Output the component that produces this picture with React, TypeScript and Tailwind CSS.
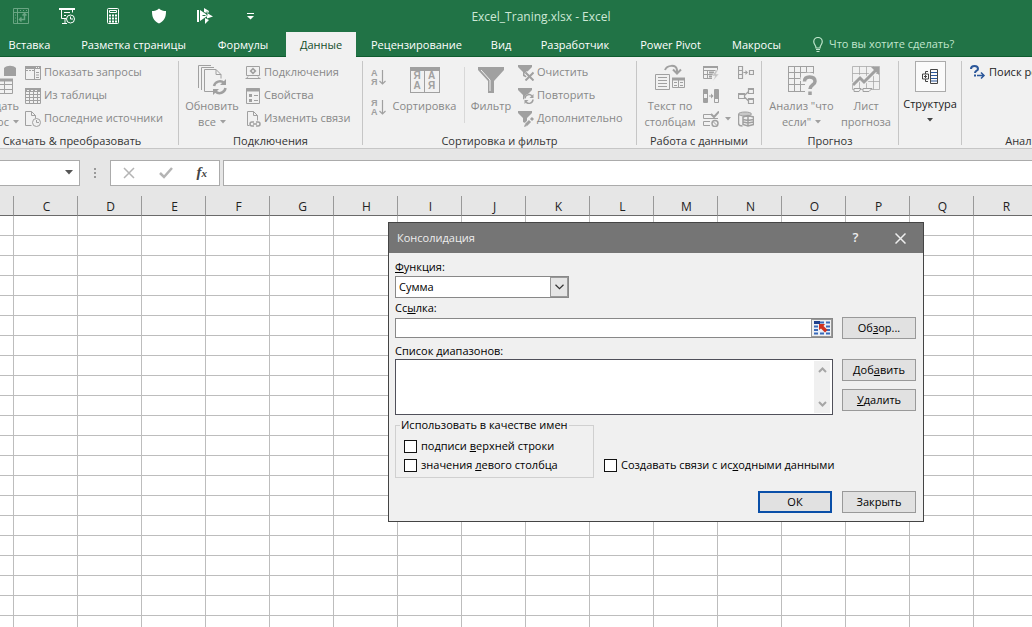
import React, { useState } from 'react';

const columns = 'CDEFGHIJKLMNOPQRSTUVWXYZ'.split('');
const rows = Array.from({ length: 50 }, (_, i) => i);

const tabs = [
    { name: 'Вставка', width: 'w-[67px] pr-2' },
    { name: 'Разметка страницы', width: 'w-[133px]' },
    { name: 'Формулы', width: 'w-[86px]' },
    { name: 'Данные', width: 'w-[70px]' },
    { name: 'Рецензирование', width: 'w-[121px]' },
    { name: 'Вид', width: 'w-[48px]' },
    { name: 'Разработчик', width: 'w-[100px]' },
    { name: 'Power Pivot', width: 'w-[91px]' },
    { name: 'Макросы', width: 'w-[81px]' },
];

/* ---------- Icons ---------- */

interface IconProps {
    size?: number;
    className?: string;
    children: React.ReactNode;
}

function Icon({ size = 16, className = 'text-[#a0a0a0]', children }: IconProps) {
    return (
        <svg
            width={size}
            height={size}
            viewBox={`0 0 ${size} ${size}`}
            fill="none"
            stroke="currentColor"
            className={`shrink-0 ${className}`}
            aria-hidden="true"
        >
            {children}
        </svg>
    );
}

function Caret({ className = 'text-[#a0a0a0]' }: { className?: string }) {
    return (
        <svg width="6" height="4" viewBox="0 0 6 4" className={`inline-block shrink-0 ${className}`} aria-hidden="true">
            <path d="M0 0h6L3 3.5z" fill="currentColor" />
        </svg>
    );
}

const PivotIcon = () => (
    <Icon className="text-[#6aa583]">
        <path d="M.5.5h15v15H.5zM.5 4.5h15M4.5.5v15" />
        <path d="M7 11.5h4.500V6M9.500 7.500l2-2 2 2M8.500 9.500l-2 2 2 2" strokeWidth="1.500" />
        <path d="M2 7h1M2 10h1M2 13h1M7 2.500h1M10 2.500h1M13 2.500h1" />
    </Icon>
);

const PreviewIcon = () => (
    <Icon className="text-white">
        <path d="M0 1h16" strokeWidth="2" />
        <path d="M2.500 1v9.500H7M13.500 1v3.500M5 4.500h6M5 7.500h2" />
        <circle cx="11.500" cy="11" r="4" />
        <path d="M11.500 8.500V11H14M3 15.500h5M6 11v4" />
    </Icon>
);

const CalculatorIcon = () => (
    <Icon className="text-white">
        <rect x="2.500" y=".5" width="11" height="15" rx="1" />
        <path d="M4.500 2.500h7v2h-7z" />
        <path d="M4 7.500h2M7 7.500h2M10 7.500h2M4 10.500h2M7 10.500h2M10 10.500h2M4 13.500h2M7 13.500h2M10 13.500h2" strokeWidth="2" />
    </Icon>
);

const ShieldIcon = () => (
    <Icon className="text-white">
        <path d="M8 .5C6 2.500 3.500 3 1 3c0 6 1.500 10 7 12.500C13.500 13 15 9 15 3 12.500 3 10 2.500 8 .5z" fill="currentColor" stroke="none" />
    </Icon>
);

const RunIcon = () => (
    <Icon className="text-white">
        <path d="M1 2v12" strokeWidth="2" />
        <path d="M3 2l8 5.500L3 13zM7 0l5 3-1 2.500L7 4zM10 5l6 3.500-6 2zM8 10l4 2-4 4z" fill="currentColor" stroke="none" />
        <path d="M5.500 7.500h3M10 3.500v4" stroke="#217346" />
    </Icon>
);

const QueriesIcon = () => (
    <Icon>
        <path d="M.5 1.500h15v13H.5zM9.500 4v10.500" />
        <path d="M0 2.500h16" strokeWidth="3" />
        <path d="M11 7.500h3M11 10h3M11 12.500h3" />
        <path d="M1 5.500h8" strokeDasharray="2 1" />
        <path d="M11 2.500h1M13 2.500h1" stroke="#f1f1f1" />
    </Icon>
);

const TableIcon = () => (
    <Icon>
        <path d="M.5.500h15v15H.5zM.5 6.500h15M.5 9.500h15M.5 12.500h15M4.500 3v12.500M8.500 3v12.500M12.500 3v12.500" />
        <path d="M0 2h16" strokeWidth="4" />
        <path d="M2 2.500h2M6 2.500h2M10 2.500h2" stroke="#f1f1f1" />
    </Icon>
);

const RecentIcon = () => (
    <Icon>
        <path d="M6.500 14.500h-6V.5h6l4 4v3M6.500.5v4h4" />
        <circle cx="11.500" cy="11.500" r="4" />
        <path d="M11.500 9v2.500H14" />
    </Icon>
);

const ConnectionsIcon = () => (
    <Icon>
        <path d="M1.500 1.500h13v9h-13zM.5 13.500h15M3 11.500l-1.500 2M13 11.500l1.500 2" />
        <path d="M8 2.500L11.500 6 8 9.500 4.500 6z" fill="currentColor" stroke="none" />
        <circle cx="8" cy="6" r="1" fill="#f1f1f1" stroke="none" />
    </Icon>
);

const PropertiesIcon = () => (
    <Icon>
        <path d="M1.500.5h13v15h-13z" />
        <path d="M1 2h14" strokeWidth="3" />
        <path d="M4 6h3v3H4zM4 11h3v3H4z" fill="currentColor" stroke="none" />
        <path d="M9 7.500h4M9 12.500h4" />
    </Icon>
);

const EditLinksIcon = () => (
    <Icon>
        <path d="M4.500 14.500h-2V.5h6l4 4v5M8.500.5v4h4" />
        <path d="M9 11H7a2 2 0 0 0 0 4h2M11 11h2a2 2 0 0 1 0 4h-2M8 13h4" strokeWidth="1.500" />
    </Icon>
);

const RefreshAllIcon = () => (
    <Icon size={32}>
        <path d="M2.500 24V1.500H15M5.500 26V3.500H18" />
        <path d="M18 27.500H8.500v-22H20l5 5v4M20 5.500v5h5" />
        <path d="M18 22a6 6 0 0 1 10-3M29.500 24a6 6 0 0 1-10 3.500" strokeWidth="2.500" />
        <path d="M30 15v6h-6zM17 31v-6h6z" fill="currentColor" stroke="none" />
    </Icon>
);

function SortIcon({ first, second }: { first: string; second: string }) {
    return (
        <span className="flex h-[18px] items-center gap-px text-[#a0a0a0]">
            <span className="flex flex-col font-['Liberation_Sans',sans-serif] text-[9px] leading-[9px] font-bold">
                <span>{first}</span>
                <span>{second}</span>
            </span>
            <svg width="7" height="16" viewBox="0 0 7 16" fill="none" stroke="currentColor" aria-hidden="true">
                <path d="M3.500 0v14M.5 11l3 3 3-3" strokeWidth="1.200" />
            </svg>
        </span>
    );
}

function SortDialogIcon() {
    return (
        <span className="grid h-[26px] w-[30px] grid-cols-2 border border-t-4 border-[#a0a0a0] text-center font-['Liberation_Sans',sans-serif] text-[10px] leading-[10px] font-bold text-[#a0a0a0]">
            <span className="border-r border-[#a0a0a0]">Я</span>
            <span>А</span>
            <span className="border-r border-[#a0a0a0]">А</span>
            <span>Я</span>
        </span>
    );
}

const FilterIcon = () => (
    <Icon size={28}>
        <path d="M1 1h26v3L17 15v12h-6V15L1 4z" fill="currentColor" stroke="none" />
        <path d="M4 4l9 10v11" stroke="#f1f1f1" />
    </Icon>
);

const Funnel = () => <path d="M0 0h14v2L9 7v6l-4-2V7L0 2z" fill="currentColor" stroke="none" />;

const ClearFilterIcon = () => (
    <Icon>
        <Funnel />
        <path d="M7.500 7.500l8 8M15.500 7.500l-8 8" stroke="#f1f1f1" strokeWidth="4" />
        <path d="M7.500 7.500l8 8M15.500 7.500l-8 8" strokeWidth="2" />
    </Icon>
);

const ReapplyIcon = () => (
    <Icon>
        <Funnel />
        <circle cx="11" cy="11" r="5" fill="#f1f1f1" stroke="none" />
        <path d="M7 10.500a4 4 0 0 1 7-2.500M15 11.500a4 4 0 0 1-7 2.500" strokeWidth="1.500" />
        <path d="M15.500 6v4h-4zM6.500 16v-4h4z" fill="currentColor" stroke="none" />
    </Icon>
);

const AdvancedFilterIcon = () => (
    <Icon>
        <Funnel />
        <path d="M7 15.500l8-8.500" stroke="#f1f1f1" strokeWidth="5" />
        <path d="M8 14l4-4M13 9l2-2" strokeWidth="3" />
        <path d="M6 16l1-3 2 2z" fill="currentColor" stroke="none" />
    </Icon>
);

const TextToColumnsIcon = () => (
    <Icon size={32}>
        <path d="M1.500 10.500h14v15h-14zM4 13.500h9M4 16.500h9M4 19.500h9M4 22.500h9" />
        <path d="M18.500 14.500h12v9h-12zM20 18.500h3M26 18.500h3M20 21.500h3M26 21.500h3M24.500 15v9" />
        <path d="M18 15h13" strokeWidth="3" />
        <path d="M11 6c2-5 11-6 12 0v3M19 5.500l4 4 4-4" strokeWidth="2" />
    </Icon>
);

const FlashFillIcon = () => (
    <Icon>
        <path d="M9 13.500H.5v-12h14V6M.5 5.500h14M.5 9.500H10M4.500 5v8" />
        <path d="M0 2h15" strokeWidth="2" />
        <path d="M6 7.500h5M6 11.500h3" strokeWidth="2" />
        <path d="M13 5l-4 6h3l-2 5 6-7h-3l2-4z" fill="#c4c4c4" stroke="#f1f1f1" strokeWidth=".5" />
    </Icon>
);

const DuplicatesIcon = () => (
    <Icon>
        <path d="M.5 1.500h4v13h-4zM11.500 1.500h4v13h-4zM.5 10.500h4M11.500 10.500h4M6 8h4" />
        <path d="M8 5.500v5L10.500 8z" fill="currentColor" stroke="none" />
        <path d="M1 2h4v4H1zM1 10h4v4H1zM11 2h4v8h-4z" fill="currentColor" stroke="none" />
    </Icon>
);

const ValidationIcon = () => (
    <Icon>
        <path d="M8 3.500H.5v4H15M7 10.500H.5v4H7" />
        <path d="M8 3l3 3 5-5.500" strokeWidth="2" />
        <circle cx="12" cy="12.500" r="3" strokeWidth="1.500" fill="#f1f1f1" />
        <path d="M10 10.500l4 4" />
    </Icon>
);

const ConsolidateIcon = () => (
    <Icon>
        <path d="M.5 1.500h4v12h-4zM.5 5.500h4M.5 9.500h4M5.500 7.500h3M11.500 5.500h4v4h-4z" strokeWidth="1.200" />
        <path d="M7.500 5v5L10 7.500z" fill="currentColor" stroke="none" />
    </Icon>
);

const RelationsIcon = () => (
    <Icon>
        <path d="M.5 5.500h6v5h-6zM10.500.5h5v5h-5zM10.500 10.500h5v5h-5zM6.500 7.500l4-4M6.500 9l4 4" strokeWidth="1.200" />
        <path d="M0 6h7M10 1h6M10 11h6" strokeWidth="2" />
    </Icon>
);

const DataModelIcon = () => (
    <Icon>
        <path d="M.5 3v9c0 1.500 1.500 3 4 3" strokeWidth="1.500" />
        <ellipse cx="7" cy="3" rx="6.500" ry="2" fill="#c8c8c8" />
        <path d="M5 6l5-1.500L15.500 6v7.500L10 15l-5-1.500zM5 8.500l5 1 5.500-1M5 11l5 1 5.500-1M10 5v10" fill="#f1f1f1" strokeWidth="1.500" />
    </Icon>
);

const WhatIfIcon = () => (
    <svg width="30" height="30" viewBox="0 0 30 30" className="text-[#a0a0a0]" aria-hidden="true">
        <path
            d="M1.500 1v26M7.500 1v26M13.500 1v26M19.500 1v12M26.500 1v9M1 1.500h26M1 7.500h26M1 13.500h15M1 19.500h17M1 26.500h17"
            fill="none"
            stroke="currentColor"
        />
        <path d="M16 16c0-4.500 3-5.500 6-5.500s6 1.500 6 5-5 4-5 8.500" fill="none" stroke="#f1f1f1" strokeWidth="6" />
        <path d="M17.500 16.500c0-3 2-4.500 5-4.500s5.500 1 5.500 4.500-5 3.500-5 7.500M23 26.500v3.500" fill="none" stroke="currentColor" strokeWidth="3.500" />
    </svg>
);

const ForecastIcon = () => (
    <Icon size={30}>
        <path d="M1.500 1.500h27v23h-27zM8.500 1.500v23M15.500 1.500v23M22.500 1.500v23M1.500 8.500h27M1.500 16.500h27" strokeOpacity=".7" />
        <path d="M2 20l7-7 4 4L25 5" stroke="#f1f1f1" strokeWidth="5" />
        <path d="M2 20l7-7 4 4L25 5" strokeWidth="3" />
        <path d="M28 2v8l-8-8z" fill="currentColor" stroke="none" />
        <path d="M3 23.500h7l-2 3H3zM12 23.500h9l-3 3h-6z" fill="#f1f1f1" />
    </Icon>
);

const OutlineIcon = () => (
    <Icon className="text-[#444444]">
        <path d="M8.500.5h7v14h-7zM6 2.500H3.500V5M6 12.500H3.500V10M.5 5h6v5h-6zM2 7.500h3M3.500 6v3" />
        <path d="M9 3.500h6M9 6.500h6M9 9.500h6M9 12h6" stroke="#2b579a" strokeWidth="1.200" />
    </Icon>
);

const SolverIcon = () => (
    <Icon className="text-[#2b579a]">
        <path d="M1 4C1 2 2.500 1 4.500 1S8 2 8 4 5 5.500 5 8M5 9.500v2" strokeWidth="2" />
        <path d="M7 10.500h7M11 7.500l3 3-3 3" strokeWidth="1.500" />
    </Icon>
);

const RangePickerIcon = () => (
    <svg width="16" height="14" viewBox="0 0 16 14" aria-hidden="true">
        <path d="M0 0h16v14H0z" fill="#eaf0fa" />
        <path d="M0 1.500h4M6 1.500h4M12 1.500h4M0 5.500h4M12 5.500h4M0 9h4M12 9h4M0 12.500h4M6 12.500h4M12 12.500h4" stroke="#3a6ab8" strokeWidth="2" />
        <path d="M0 0h6v3H0z" fill="#1f3f8c" />
        <path d="M5 3h6L9.500 5l4 4-2.500 2.500-4-4L5 9z" fill="#d0321f" />
    </svg>
);

/* ---------- Ribbon pieces ---------- */

interface GroupProps {
    label?: string;
    className: string;
    children: React.ReactNode;
}

function Group({ label, className, children }: GroupProps) {
    return (
        <section className={`flex shrink-0 flex-col border-r border-[#c6c6c6] ${className}`}>
            <div className="flex h-[72px] w-full shrink-0">{children}</div>
            {label && <h2 className="text-center text-[11px] leading-4 text-[#333333]">{label}</h2>}
        </section>
    );
}

function SmallButton({ icon, text, enabled }: { icon: React.ReactNode; text: string; enabled?: boolean }) {
    return (
        <button
            className={`flex h-[23px] items-center gap-[3px] whitespace-nowrap text-[11px] ${
                enabled ? 'text-[#222222]' : 'text-[#888888]'
            }`}
        >
            {icon}
            <span>{text}</span>
        </button>
    );
}

interface BigButtonProps {
    icon: React.ReactNode;
    lines: string[];
    caret?: boolean;
    className: string;
}

function BigButton({ icon, lines, caret, className }: BigButtonProps) {
    return (
        <button className={`flex shrink-0 flex-col items-center whitespace-nowrap text-[11px] leading-4 text-[#888888] ${className}`}>
            <span className="flex h-[37px] items-center justify-center">{icon}</span>
            {lines.map((line, i) => (
                <span key={line} className="flex items-center gap-1">
                    {line}
                    {caret && i === lines.length - 1 && <Caret />}
                </span>
            ))}
        </button>
    );
}

function Ribbon() {
    return (
        <div className="flex h-[92px] shrink-0 border-b border-[#c6c6c6] bg-[#f1f1f1] pt-1 pb-[3px]">
            <Group label="Скачать & преобразовать" className="w-[179px] pr-[34px]">
                <div className="flex w-[22px] shrink-0 justify-end overflow-hidden pr-[3px]">
                    <BigButton
                        className="items-end!"
                        icon={
                            <Icon size={32}>
                                <path d="M17 4c3-3 9-3 12 0v8H17z" fill="currentColor" stroke="none" />
                                <path d="M9.500 15.500h16v14h-16zM9.500 20.500h16M9.500 25.500h16M17.500 17v13" />
                                <path d="M9 16h17" strokeWidth="3" />
                            </Icon>
                        }
                        lines={['Создать', 'запрос']}
                        caret
                    />
                </div>
                <div className="flex flex-col pl-[3px]">
                    <SmallButton icon={<QueriesIcon />} text="Показать запросы" />
                    <SmallButton icon={<TableIcon />} text="Из таблицы" />
                    <SmallButton icon={<RecentIcon />} text="Последние источники" />
                </div>
            </Group>

            <Group label="Подключения" className="w-[184px]">
                <BigButton className="w-[66px]" icon={<RefreshAllIcon />} lines={['Обновить', 'все']} caret />
                <div className="flex flex-col">
                    <SmallButton icon={<ConnectionsIcon />} text="Подключения" />
                    <SmallButton icon={<PropertiesIcon />} text="Свойства" />
                    <SmallButton icon={<EditLinksIcon />} text="Изменить связи" />
                </div>
            </Group>

            <Group label="Сортировка и фильтр" className="w-[274px]">
                <div className="flex w-6 flex-col gap-3 pt-2 pl-2">
                    <button aria-label="Сортировка от А до Я">
                        <SortIcon first="А" second="Я" />
                    </button>
                    <button aria-label="Сортировка от Я до А">
                        <SortIcon first="Я" second="А" />
                    </button>
                </div>
                <BigButton className="w-[75px]" icon={<SortDialogIcon />} lines={['Сортировка']} />
                <div className="mt-1.5 ml-0.5 h-14 w-px bg-[#d8d8d8]" />
                <BigButton className="w-[52px]" icon={<FilterIcon />} lines={['Фильтр']} />
                <div className="flex flex-col pl-px">
                    <SmallButton icon={<ClearFilterIcon />} text="Очистить" />
                    <SmallButton icon={<ReapplyIcon />} text="Повторить" />
                    <SmallButton icon={<AdvancedFilterIcon />} text="Дополнительно" />
                </div>
            </Group>

            <Group label="Работа с данными" className="w-[125px]">
                <BigButton className="w-[66px]" icon={<TextToColumnsIcon />} lines={['Текст по', 'столбцам']} />
                <div className="flex w-[35px] flex-col">
                    <button className="flex h-[23px] items-center" aria-label="Мгновенное заполнение"><FlashFillIcon /></button>
                    <button className="flex h-[23px] items-center" aria-label="Удалить дубликаты"><DuplicatesIcon /></button>
                    <button className="flex h-[23px] items-center gap-1.5" aria-label="Проверка данных">
                        <ValidationIcon />
                        <Caret />
                    </button>
                </div>
                <div className="flex flex-col">
                    <button className="flex h-[23px] items-center" aria-label="Консолидация"><ConsolidateIcon /></button>
                    <button className="flex h-[23px] items-center" aria-label="Отношения"><RelationsIcon /></button>
                    <button className="flex h-[23px] items-center" aria-label="Модель данных"><DataModelIcon /></button>
                </div>
            </Group>

            <Group label="Прогноз" className="w-[137px]">
                <BigButton className="w-[79px]" icon={<WhatIfIcon />} lines={['Анализ "что', 'если"']} caret />
                <BigButton className="w-[50px]" icon={<ForecastIcon />} lines={['Лист', 'прогноза']} />
            </Group>

            <Group className="w-[63px]">
                <button className="flex w-full flex-col items-center text-[11px] leading-4 text-[#222222]">
                    <span className="mb-1 flex h-[31px] w-[31px] items-center justify-center border border-[#ababab] bg-[#fafafa]">
                        <OutlineIcon />
                    </span>
                    <span>Структура</span>
                    <Caret className="mt-1.5 text-[#444444]" />
                </button>
            </Group>

            <Group label="Анализ" className="w-[126px]">
                <div className="pl-2">
                    <SmallButton enabled icon={<SolverIcon />} text="Поиск решения" />
                </div>
            </Group>
        </div>
    );
}

/* ---------- Header ---------- */

function Header() {
    const [activeTab, setActiveTab] = useState('Данные');

    return (
        <header className="shrink-0 border-b border-[#0e5c2f] bg-[#217346]">
            <div className="flex h-8 items-center">
                <div className="flex items-center gap-[30px] pl-[13px]">
                    <button aria-label="Сводная таблица"><PivotIcon /></button>
                    <button aria-label="Просмотр"><PreviewIcon /></button>
                    <button aria-label="Калькулятор"><CalculatorIcon /></button>
                    <button aria-label="Защита"><ShieldIcon /></button>
                    <button aria-label="Выполнить"><RunIcon /></button>
                    <button aria-label="Настройка панели">
                        <svg width="7" height="7" viewBox="0 0 7 7" className="ml-1 text-white" aria-hidden="true">
                            <path d="M0 0h7v1H0zM0 3h7L3.500 6.500z" fill="currentColor" />
                        </svg>
                    </button>
                </div>
                <h1 className="flex-1 pt-0.5 pr-[204px] text-center text-xs text-[#cde8d6]">Excel_Traning.xlsx - Excel</h1>
            </div>
            <nav className="flex h-6 text-[11px] text-white">
                {tabs.map((tab) => (
                    <button
                        key={tab.name}
                        onClick={() => setActiveTab(tab.name)}
                        className={`h-[25px] shrink-0 whitespace-nowrap pt-px text-center ${tab.width} ${
                            activeTab === tab.name ? 'bg-[#f1f1f1] text-[#124d2a]' : ''
                        }`}
                    >
                        {tab.name}
                    </button>
                ))}
                <button className="flex items-center gap-1.5 whitespace-nowrap pt-px pl-4 text-[#c0e6cd]">
                    <svg width="10" height="15" viewBox="0 0 10 15" fill="none" stroke="currentColor" aria-hidden="true">
                        <path d="M3 11C3 8 .75 7.500.75 4.750a4.250 4.250 0 0 1 8.500 0C9.250 7.500 7 8 7 11zM3 12.500h4M3.500 14.500h3" strokeWidth="1.200" />
                    </svg>
                    <span>Что вы хотите сделать?</span>
                </button>
            </nav>
        </header>
    );
}

function FormulaBar() {
    return (
        <div className="flex h-[47px] shrink-0 items-center bg-[#e6e6e6]">
            <div className="flex h-[26px] w-20 items-center border border-l-0 border-[#ababab] bg-white">
                <input aria-label="Имя" className="min-w-0 flex-1 outline-none" />
                <button aria-label="Список имен" className="flex w-5 justify-center">
                    <svg width="8" height="5" viewBox="0 0 8 5" aria-hidden="true">
                        <path d="M0 0h8L4 4.500z" fill="#555555" />
                    </svg>
                </button>
            </div>
            <svg width="30" height="12" viewBox="0 0 30 12" aria-hidden="true">
                <path d="M14 1h2v2h-2zM14 5h2v2h-2zM14 9h2v2h-2z" fill="#999999" />
            </svg>
            <div className="flex h-[26px] w-[110px] items-center justify-around border border-[#ababab] bg-white">
                <button aria-label="Отмена">
                    <svg width="12" height="12" viewBox="0 0 12 12" aria-hidden="true">
                        <path d="M1 1l10 10M11 1L1 11" stroke="#b4b4b4" strokeWidth="1.500" />
                    </svg>
                </button>
                <button aria-label="Ввод">
                    <svg width="14" height="12" viewBox="0 0 14 12" aria-hidden="true">
                        <path d="M1 6l4 4 8-9" fill="none" stroke="#b4b4b4" strokeWidth="2.500" />
                    </svg>
                </button>
                <button className="font-['Liberation_Serif',serif] text-[15px] leading-5 font-bold text-[#444444] italic">
                    f<span className="text-[11px]">x</span>
                </button>
            </div>
            <input
                aria-label="Строка формул"
                className="ml-[3px] h-[26px] min-w-0 flex-1 border border-r-0 border-[#ababab] bg-white px-1 text-xs outline-none"
            />
        </div>
    );
}

function Sheet() {
    return (
        <div className="min-h-0 flex-1 overflow-hidden bg-white">
            <table className="w-[1550px] table-fixed border-separate border-spacing-0">
                <colgroup>
                    <col className="w-[14px]" />
                    {columns.map((c) => (
                        <col key={c} className="w-16" />
                    ))}
                </colgroup>
                <thead>
                    <tr className="h-5 bg-[#e6e6e6] text-xs leading-4 text-[#222222]">
                        <th className="border-r border-b border-r-[#999999] border-b-[#6a6a6a] p-0" />
                        {columns.map((c) => (
                            <th key={c} className="border-r border-b border-r-[#999999] border-b-[#6a6a6a] p-0 pt-0.5 pl-0.5 font-normal">
                                {c}
                            </th>
                        ))}
                    </tr>
                </thead>
                <tbody>
                    {rows.map((r) => (
                        <tr key={r} className="h-5">
                            <td className="border-r border-b border-[#bdbdbd] p-0" />
                            {columns.map((c) => (
                                <td key={c} className="border-r border-b border-[#bdbdbd] p-0" />
                            ))}
                        </tr>
                    ))}
                </tbody>
            </table>
        </div>
    );
}

/* ---------- Dialog ---------- */

function DialogButton({ primary, children }: { primary?: boolean; children: React.ReactNode }) {
    return (
        <button
            className={`h-[22px] w-[74px] shrink-0 bg-[#e1e1e1] text-[11px] leading-4 ${
                primary ? 'border-2 border-[#0a4fa8]' : 'border border-[#999999]'
            }`}
        >
            {children}
        </button>
    );
}

function CheckBox({ id, children }: { id: string; children: React.ReactNode }) {
    return (
        <div className="flex h-[19px] items-center gap-1">
            <input id={id} type="checkbox" className="h-[13px] w-[13px] shrink-0 appearance-none border border-[#111111] bg-white checked:bg-[#0a4fa8]" />
            <label htmlFor={id} className="whitespace-nowrap">{children}</label>
        </div>
    );
}

function ScrollArrow({ d }: { d: string }) {
    return (
        <svg width="9" height="6" viewBox="0 0 9 6" fill="none" stroke="#a6a6a6" strokeWidth="2" aria-hidden="true">
            <path d={d} />
        </svg>
    );
}

function ConsolidateDialog() {
    return (
        <div
            role="dialog"
            aria-labelledby="dialog-title"
            className="absolute top-[222px] left-[388px] w-[536px] border border-[#444444] bg-[#f0f0f0] text-[11px] text-black"
        >
            <div className="flex h-[30px] items-center bg-[#757575] pl-2 text-[#eeeeee]">
                <h2 id="dialog-title" className="flex-1">Консолидация</h2>
                <button aria-label="Справка" className="w-[45px] text-[13px] font-semibold">?</button>
                <button aria-label="Закрыть окно" className="flex w-[45px] justify-center">
                    <svg width="11" height="11" viewBox="0 0 11 11" stroke="currentColor" strokeWidth="1.500" aria-hidden="true">
                        <path d="M.5.500l10 10M10.500.500l-10 10" />
                    </svg>
                </button>
            </div>

            <form className="pt-1.5 pr-[7px] pb-2 pl-1.5" onSubmit={(e) => e.preventDefault()}>
                <label htmlFor="func" className="block h-[17px] leading-4">
                    <u>Ф</u>ункция:
                </label>
                <div className="flex h-[22px] w-[174px] border border-[#888888] bg-white">
                    <select id="func" className="min-w-0 flex-1 appearance-none pl-[3px] outline-none">
                        <option>Сумма</option>
                        <option>Количество</option>
                        <option>Среднее</option>
                    </select>
                    <span className="flex w-[18px] items-center justify-center border border-[#999999] bg-[#e5e5e5]">
                        <svg width="9" height="6" viewBox="0 0 9 6" fill="none" stroke="#333333" strokeWidth="1.200" aria-hidden="true">
                            <path d="M.5.750l4 4 4-4" />
                        </svg>
                    </span>
                </div>

                <label htmlFor="ref" className="block h-[19px] leading-5">
                    Сс<u>ы</u>лка:
                </label>
                <div className="flex items-center gap-[9px]">
                    <div className="flex h-5 flex-1 border border-[#888888] bg-white">
                        <input id="ref" className="min-w-0 flex-1 px-1 outline-none" />
                        <button aria-label="Выбрать диапазон" className="flex w-[21px] items-center justify-center border border-[#999999] bg-[#f0f0f0]">
                            <RangePickerIcon />
                        </button>
                    </div>
                    <DialogButton>Об<u>з</u>ор...</DialogButton>
                </div>

                <label htmlFor="ranges" className="block h-5 pt-0.5 leading-5">Список диапазонов:</label>
                <div className="flex gap-[9px]">
                    <div className="flex h-14 flex-1 border border-[#50505a] bg-white">
                        <select id="ranges" multiple className="min-w-0 flex-1 appearance-none overflow-hidden outline-none" />
                        <div className="my-px mr-0.5 flex w-4 flex-col items-center justify-between bg-[#f0f0f0] py-1.5">
                            <ScrollArrow d="M1 5l3.500-3.500L8 5" />
                            <ScrollArrow d="M1 1l3.500 3.500L8 1" />
                        </div>
                    </div>
                    <div className="flex flex-col gap-2">
                        <DialogButton>Доб<u>а</u>вить</DialogButton>
                        <DialogButton><u>У</u>далить</DialogButton>
                    </div>
                </div>

                <div className="mt-0.5 flex items-end gap-[10px]">
                    <fieldset className="w-[199px] border border-[#d0d0d0] px-1 pt-1 pb-0.5">
                        <legend className="px-px leading-4 whitespace-nowrap">Использовать в качестве имен</legend>
                        <div className="px-1">
                            <CheckBox id="top-row">подписи <u>в</u>ерхней строки</CheckBox>
                            <CheckBox id="left-column">значения <u>л</u>евого столбца</CheckBox>
                        </div>
                    </fieldset>
                    <div className="pb-[3px]">
                        <CheckBox id="links">Создавать связи с ис<u>х</u>одными данными</CheckBox>
                    </div>
                </div>

                <div className="mt-[13px] flex justify-end gap-[10px]">
                    <DialogButton primary>ОК</DialogButton>
                    <DialogButton>Закрыть</DialogButton>
                </div>
            </form>
        </div>
    );
}

export default function App() {
    return (
        <div className="relative flex h-screen flex-col overflow-hidden bg-white font-['Open_Sans','Noto_Sans',sans-serif]">
            <Header />
            <Ribbon />
            <FormulaBar />
            <Sheet />
            <ConsolidateDialog />
        </div>
    );
}
